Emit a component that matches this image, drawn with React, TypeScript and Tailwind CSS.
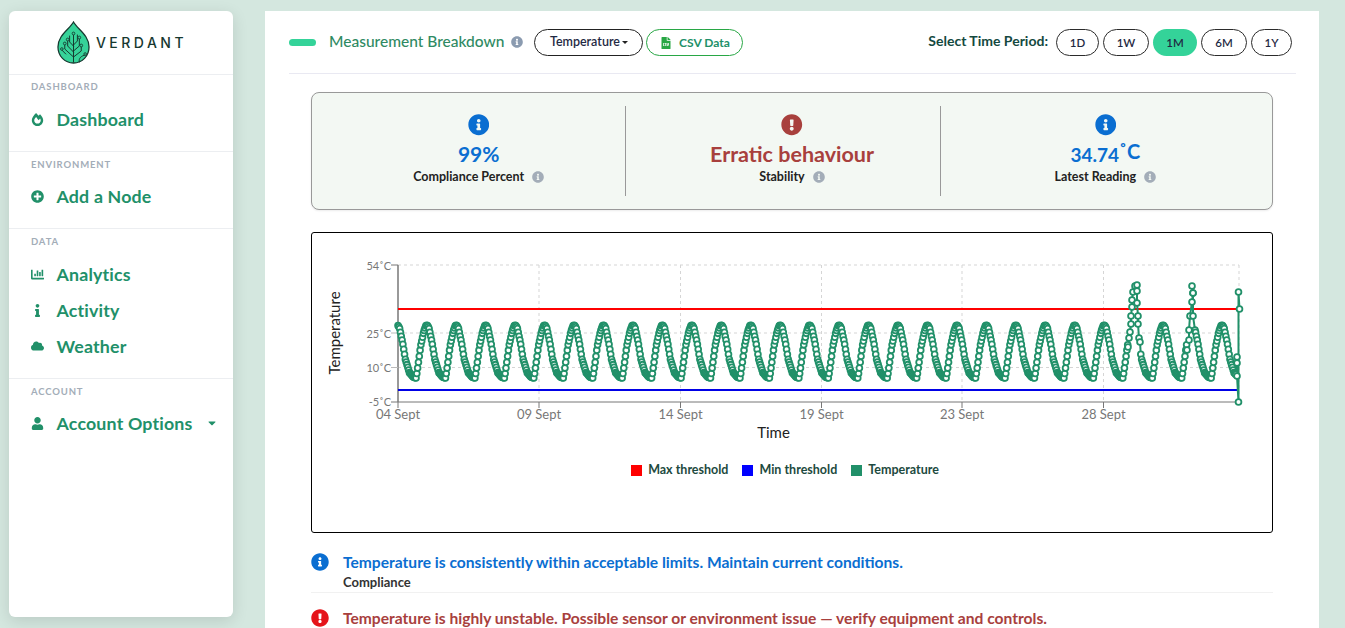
import React from "react";
import { FaFireAlt, FaPlusCircle, FaChartBar, FaInfo, FaCloud, FaUser, FaCaretDown, FaInfoCircle, FaExclamationCircle, FaFileCsv } from "react-icons/fa";

const GREEN = "#219069";

function lerpTable(table: [number, number][], u: number) {
  for (let i = 1; i < table.length; i++) {
    if (u <= table[i][0]) {
      const [a, b] = table[i - 1];
      const [c, d] = table[i];
      return b + ((d - b) * (u - a)) / (c - a);
    }
  }
  return table[table.length - 1][1];
}

const FALL: [number, number][] = [[0, 0], [0.1, 0.05], [0.27, 0.33], [0.42, 0.65], [0.64, 0.9], [0.85, 0.985], [1, 1]];
const RISE: [number, number][] = [[0, 0], [0.16, 0.22], [0.41, 0.6], [0.69, 0.87], [0.88, 0.985], [1, 1]];

function wave(x: number) {
  const x0 = 397.6;
  const period = 29.45;
  const t = (((x - x0) % period) + period) % period / period;
  const split = 0.63;
  if (t < split) return 325 + 53 * lerpTable(FALL, t / split);
  return 378 - 53 * lerpTable(RISE, (t - split) / (1 - split));
}

const spikeA: [number, number][] = [[1128, 347], [1129, 338], [1130, 332], [1131, 324], [1131, 316], [1132, 307], [1132, 300], [1133, 292], [1135, 286], [1137, 285], [1137, 291], [1137, 303], [1138, 316], [1138, 324], [1139, 338], [1140, 342]];
const spikeB: [number, number][] = [[1187, 350], [1189, 340], [1189, 330], [1190, 316], [1192, 302], [1193, 293], [1192, 286], [1193, 293], [1193, 316], [1195, 330]];
const tail: [number, number][] = [[1237, 357], [1237, 363], [1237, 376], [1238.5, 402], [1238.5, 292], [1239.5, 309]];

function buildPoints() {
  const pts: [number, number][] = [];
  let a = false;
  let b = false;
  for (let i = 0; ; i++) {
    const x = 398 + i * (29.45 / 36);
    if (x > 1236) break;
    if (x >= 1128 && x <= 1140) {
      if (!a) pts.push(...spikeA);
      a = true;
      continue;
    }
    if (x >= 1187 && x <= 1195) {
      if (!b) pts.push(...spikeB);
      b = true;
      continue;
    }
    pts.push([x, wave(x)]);
  }
  pts.push(...tail);
  return pts;
}

function Chart() {
  const pts = buildPoints();
  const xTicks: [number, string][] = [[398, "04 Sept"], [539, "09 Sept"], [680.5, "14 Sept"], [821.5, "19 Sept"], [962, "23 Sept"], [1103.5, "28 Sept"]];
  const yTicks: [number, string, number][] = [[265, "54˚C", 270], [333, "25˚C", 338], [367.5, "10˚C", 372], [402, "-5˚C", 406]];
  return (
    <svg width="960" height="299" viewBox="312 233 960 299" className="block">
      {xTicks.slice(1).map(([x]) => (
        <line key={x} x1={x} x2={x} y1={265} y2={402} stroke="#d5d5d5" strokeDasharray="3 3" />
      ))}
      <line x1={1239} x2={1239} y1={265} y2={402} stroke="#d5d5d5" strokeDasharray="3 3" />
      {yTicks.slice(0, 3).map(([y]) => (
        <line key={y} x1={398} x2={1239} y1={y} y2={y} stroke="#d5d5d5" strokeDasharray="3 3" />
      ))}
      <line x1={398} x2={398} y1={265} y2={402} stroke="#999" strokeWidth={2} />
      <line x1={391} x2={398} y1={265} y2={265} stroke="#777" />
      <line x1={391} x2={398} y1={333} y2={333} stroke="#bbb" />
      <line x1={391} x2={398} y1={367.5} y2={367.5} stroke="#bbb" />
      <line x1={391} x2={1239} y1={402} y2={402} stroke="#777" />
      {xTicks.map(([x]) => (
        <line key={x} x1={x} x2={x} y1={402} y2={408} stroke="#777" />
      ))}
      <line x1={398} x2={1239} y1={309} y2={309} stroke="#ff0000" strokeWidth={2} />
      <line x1={398} x2={1239} y1={390} y2={390} stroke="#0000e6" strokeWidth={2} />
      <polyline points={pts.map((p) => p.join(",")).join(" ")} fill="none" stroke={GREEN} strokeWidth={2} />
      {pts.map((p, i) => (
        <circle key={i} cx={p[0]} cy={p[1]} r={2.9} fill="#fff" stroke={GREEN} strokeWidth={1.8} />
      ))}
      {yTicks.map(([y, t, by]) => (
        <text key={t} x={391} y={by} textAnchor="end" fontSize={11} fill="#777">{t}</text>
      ))}
      {xTicks.map(([x, t]) => (
        <text key={t} x={x} y={419} textAnchor="middle" fontSize={13} fill="#777">{t}</text>
      ))}
      <text x={773.5} y={438} textAnchor="middle" fontSize={15} fill="#222">Time</text>
      <text transform="translate(340 333) rotate(-90)" textAnchor="middle" fontSize={15} fill="#222">Temperature</text>
    </svg>
  );
}

function Logo() {
  const s = "#16382f";
  return (
    <svg width="33" height="43" viewBox="0 0 34 43" fill="none" className="shrink-0" preserveAspectRatio="none">
      <path d="M17 1 C21 8 33 14 33 26 C33 35 26 42 17 42 C8 42 1 35 1 26 C1 14 13 8 17 1 Z" fill="#36d399" stroke={s} strokeWidth="1.3" />
      <g stroke={s} strokeWidth="1" strokeLinecap="round">
        <path d="M17 41 V14" />
        <path d="M17 36 L8 28 V24" />
        <path d="M17 31 L11 25 V20" />
        <path d="M17 25 L13 21 V15" />
        <path d="M17 36 L25 30 V26" />
        <path d="M17 30 L23 25 V18" />
        <path d="M17 24 L21 20 V14" />
        <path d="M5 29 L9 33" />
        <path d="M23 41 C22 37 25 35 29 34" />
      </g>
      <g fill="#36d399" stroke={s} strokeWidth="0.9">
        <circle cx="17" cy="12.5" r="1.4" />
        <circle cx="8" cy="22.5" r="1.4" />
        <circle cx="11" cy="18.5" r="1.4" />
        <circle cx="25" cy="24.5" r="1.4" />
        <circle cx="23" cy="16.5" r="1.4" />
        <circle cx="5" cy="28" r="1.3" />
        <circle cx="29" cy="33" r="1.3" />
      </g>
    </svg>
  );
}

function NavSection({ title, className, pt, children }: { title: string; className: string; pt: string; children: React.ReactNode }) {
  return (
    <div className={`border-t border-[#eceef1] px-[22px] ${className}`}>
      <div className={`text-[9.5px] font-bold tracking-[0.09em] leading-[12px] text-[#a3adb8] ${pt}`}>{title}</div>
      {children}
    </div>
  );
}

function NavItem({ icon, label, caret }: { icon: React.ReactNode; label: string; caret?: boolean }) {
  return (
    <div className="flex items-center h-[36px] text-[#219069] whitespace-nowrap">
      <span className="w-[13px] flex justify-center mr-[12.5px] text-[13px]">{icon}</span>
      <span className="text-[17.8px] tracking-[0.01em] font-bold">{label}</span>
      {caret && <FaCaretDown className="ml-[13px] text-[12px] shrink-0" />}
    </div>
  );
}

function PeriodBtn({ label, w, active }: { label: string; w: string; active?: boolean }) {
  return (
    <div className={`h-[27px] rounded-full flex items-center justify-center text-[11.5px] font-semibold text-[#1f2a44] ${w} ${active ? "bg-[#34d399]" : "border border-[#2b2b2b] bg-white"}`}>
      {label}
    </div>
  );
}

function Stat({ icon, value, label, divider }: { icon: React.ReactNode; value: React.ReactNode; label: string; divider?: string }) {
  return (
    <div className="relative h-[90px] flex flex-col items-center pt-[8px]">
      {icon}
      <div className="mt-[6px] h-[24px] flex items-center">{value}</div>
      <div className="mt-[3px] flex items-center text-[12.5px] font-bold text-[#222] leading-[16px]">
        {label}
        <FaInfoCircle className="ml-[8px] text-[12px] text-[#a3adb8]" />
      </div>
      {divider && <div className={`absolute top-0 bottom-0 w-px bg-[#999] ${divider}`} />}
    </div>
  );
}

function Legend({ color, label }: { color: string; label: string }) {
  return (
    <div className="flex items-center">
      <span className="w-[11px] h-[11px] mr-[6px]" style={{ background: color }} />
      <span className="text-[12.5px] font-bold text-[#1d4a40]">{label}</span>
    </div>
  );
}

export default function App() {
  return (
    <div className="h-screen overflow-hidden bg-[#d4e7df] flex items-start font-[Lato,sans-serif]">
      <aside className="ml-[9px] mt-[11px] w-[224px] h-[606px] shrink-0 bg-white rounded-[6px] shadow-[0_4px_16px_rgba(0,0,0,0.12)]">
        <div className="h-[63px] flex items-center justify-center gap-[6px] pb-[1px] pr-[1px]">
          <Logo />
          <span className="text-[14px] font-medium tracking-[0.25em] -mr-[3px] text-[#16382f] font-[Inter,sans-serif]">VERDANT</span>
        </div>
        <NavSection title="DASHBOARD" pt="pt-[6px]" className="h-[77px]">
          <div className="pt-[8px]">
            <NavItem icon={<FaFireAlt />} label="Dashboard" />
          </div>
        </NavSection>
        <NavSection title="ENVIRONMENT" pt="pt-[7px]" className="h-[77px]">
          <div className="pt-[7px]">
            <NavItem icon={<FaPlusCircle />} label="Add a Node" />
          </div>
        </NavSection>
        <NavSection title="DATA" pt="pt-[7px]" className="h-[150px]">
          <div className="pt-[8px]">
            <NavItem icon={<FaChartBar />} label="Analytics" />
            <NavItem icon={<FaInfo />} label="Activity" />
            <NavItem icon={<FaCloud className="text-[16px]" />} label="Weather" />
          </div>
        </NavSection>
        <NavSection title="ACCOUNT" pt="pt-[7px]" className="h-[80px]">
          <div className="pt-[7px]">
            <NavItem icon={<FaUser />} label="Account Options" caret />
          </div>
        </NavSection>
      </aside>

      <main className="ml-[32px] mt-[11px] w-[1054px] h-[700px] shrink-0 bg-white px-[24px]">
        <header className="h-[63px] border-b border-[#e9e9f2] mr-[-1px] flex items-center justify-between pt-[1px]">
          <div className="flex items-center">
            <span className="w-[27px] h-[7px] rounded-full bg-[#34d399] mr-[13px] -mt-[1px]" />
            <span className="text-[15.5px] font-medium text-[#2f8a63] -mt-[2px]">Measurement Breakdown</span>
            <FaInfoCircle className="ml-[7px] text-[12px] text-[#8b9bb0] -mt-[1px]" />
            <div className="ml-[11px] w-[109px] h-[27px] rounded-full border border-[#222] flex items-center justify-center text-[12.5px] font-semibold text-[#1f2a44]">
              Temperature
              <span className="ml-[2px] border-x-[3px] border-x-transparent border-t-[3px] border-t-[#222]" />
            </div>
            <div className="ml-[3px] w-[97px] h-[27px] rounded-full border border-[#28a745] flex items-center justify-center text-[#219069] text-[12px] font-bold">
              <FaFileCsv className="text-[#28a745] text-[12px] mr-[7px]" />
              CSV Data
            </div>
          </div>
          <div className="flex items-center mr-[4px]">
            <span className="text-[14px] font-bold text-[#14493f] mr-[8px] -mt-[5px]">Select Time Period:</span>
            <div className="flex gap-[4px]">
              <PeriodBtn label="1D" w="w-[43px]" />
              <PeriodBtn label="1W" w="w-[46px]" />
              <PeriodBtn label="1M" w="w-[44px]" active />
              <PeriodBtn label="6M" w="w-[46px]" />
              <PeriodBtn label="1Y" w="w-[41px]" />
            </div>
          </div>
        </header>

        <div className="mx-[22px] mt-[18px]">
          <section className="h-[118px] rounded-[8px] border border-[#999] bg-[#f3f8f3] shadow-[0_1px_2px_rgba(0,0,0,0.08)] px-[10px] py-[13px] grid grid-cols-3">
            <Stat
              divider="right-[9px]"
              icon={<FaInfoCircle className="text-[21.5px] text-[#0a6ed1]" />}
              value={<span className="text-[21px] font-bold text-[#0a6ed1] mt-[1px]">99%</span>}
              label="Compliance Percent"
            />
            <Stat
              divider="right-[8px]"
              icon={<FaExclamationCircle className="text-[21.5px] text-[#a8403d]" />}
              value={<span className="text-[21.5px] font-bold text-[#a8403d] mt-[1px]">Erratic behaviour</span>}
              label="Stability"
            />
            <Stat
              icon={<FaInfoCircle className="text-[21.5px] text-[#0a6ed1]" />}
              value={
                <span className="font-bold text-[#0a6ed1] flex items-start leading-[24px]">
                  <span className="text-[19px] mt-[3px]">34.74</span>
                  <span className="text-[20px] -mt-[1px]">˚C</span>
                </span>
              }
              label="Latest Reading"
            />
          </section>

          <section className="mt-[22px] h-[301px] rounded-[3px] border border-black bg-white relative">
            <Chart />
            <div className="absolute left-0 right-0 top-[228px] flex justify-center gap-[14px] pr-[14px]">
              <Legend color="#ff0000" label="Max threshold" />
              <Legend color="#0000ff" label="Min threshold" />
              <Legend color={GREEN} label="Temperature" />
            </div>
          </section>

          <section className="mt-[20px]">
            <div className="flex border-b border-[#f1f1f1] h-[40px]">
              <FaInfoCircle className="text-[18px] text-[#0a6ed1] mr-[14px] shrink-0" />
              <div>
                <div className="text-[15.6px] leading-[18px] font-bold text-[#0a6ed1] whitespace-nowrap">Temperature is consistently within acceptable limits. Maintain current conditions.</div>
                <div className="text-[13px] leading-[16px] mt-[3px] font-bold text-[#333]">Compliance</div>
              </div>
            </div>
            <div className="flex mt-[16px]">
              <FaExclamationCircle className="text-[18px] text-[#e5141a] mr-[14px] shrink-0" />
              <div className="text-[15.6px] leading-[18px] font-bold text-[#a8403d] whitespace-nowrap">Temperature is highly unstable. Possible sensor or environment issue — verify equipment and controls.</div>
            </div>
          </section>
        </div>
      </main>
    </div>
  );
}
